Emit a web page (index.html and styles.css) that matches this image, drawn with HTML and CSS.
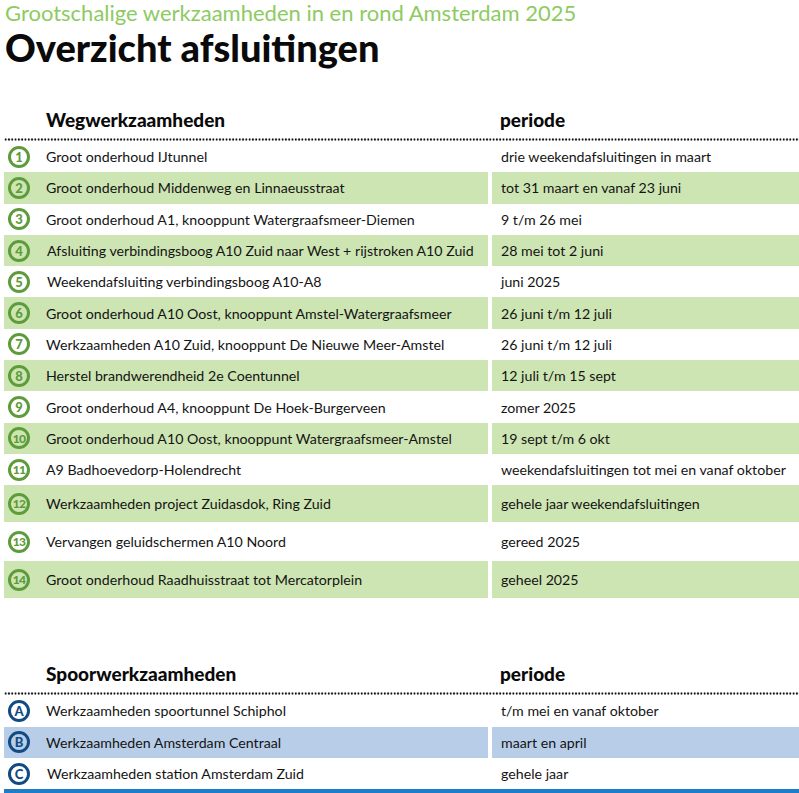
FILE: index.html
```html
<!DOCTYPE html>
<html lang="nl">
<head>
<meta charset="utf-8">
<title>Overzicht afsluitingen</title>
<link rel="stylesheet" href="styles.css">
</head>
<body>
<div class="page">
  <header class="head">
    <div class="subtitle">Grootschalige werkzaamheden in en rond Amsterdam 2025</div>
    <h1 class="title">Overzicht afsluitingen</h1>
  </header>

  <section class="tbl road">
    <div class="thead">
      <div class="th th-name">Wegwerkzaamheden</div>
      <div class="th th-per">periode</div>
    </div>
    <div class="dots"></div>
    <div class="row"><div class="c1"><span class="badge">1</span><span class="name">Groot onderhoud IJtunnel</span></div><div class="c2">drie weekendafsluitingen in maart</div></div>
    <div class="row hl"><div class="c1"><span class="badge">2</span><span class="name">Groot onderhoud Middenweg en Linnaeusstraat</span></div><div class="c2">tot 31 maart en vanaf 23 juni</div></div>
    <div class="row"><div class="c1"><span class="badge">3</span><span class="name">Groot onderhoud A1, knooppunt Watergraafsmeer-Diemen</span></div><div class="c2">9 t/m 26 mei</div></div>
    <div class="row hl"><div class="c1"><span class="badge">4</span><span class="name nudge">Afsluiting verbindingsboog A10 Zuid naar West + rijstroken A10 Zuid</span></div><div class="c2">28 mei tot 2 juni</div></div>
    <div class="row"><div class="c1"><span class="badge">5</span><span class="name nudge">Weekendafsluiting verbindingsboog A10-A8</span></div><div class="c2">juni 2025</div></div>
    <div class="row hl"><div class="c1"><span class="badge">6</span><span class="name">Groot onderhoud A10 Oost, knooppunt Amstel-Watergraafsmeer</span></div><div class="c2">26 juni t/m 12 juli</div></div>
    <div class="row"><div class="c1"><span class="badge">7</span><span class="name">Werkzaamheden A10 Zuid, knooppunt De Nieuwe Meer-Amstel</span></div><div class="c2">26 juni t/m 12 juli</div></div>
    <div class="row hl"><div class="c1"><span class="badge">8</span><span class="name">Herstel brandwerendheid 2e Coentunnel</span></div><div class="c2">12 juli t/m 15 sept</div></div>
    <div class="row"><div class="c1"><span class="badge">9</span><span class="name">Groot onderhoud A4, knooppunt De Hoek-Burgerveen</span></div><div class="c2">zomer 2025</div></div>
    <div class="row hl"><div class="c1"><span class="badge two">10</span><span class="name">Groot onderhoud A10 Oost, knooppunt Watergraafsmeer-Amstel</span></div><div class="c2">19 sept t/m 6 okt</div></div>
    <div class="row"><div class="c1"><span class="badge two">11</span><span class="name">A9 Badhoevedorp-Holendrecht</span></div><div class="c2">weekendafsluitingen tot mei en vanaf oktober</div></div>
    <div class="row hl tall"><div class="c1"><span class="badge two">12</span><span class="name">Werkzaamheden project Zuidasdok, Ring Zuid</span></div><div class="c2">gehele jaar weekendafsluitingen</div></div>
    <div class="row taller"><div class="c1"><span class="badge two">13</span><span class="name">Vervangen geluidschermen A10 Noord</span></div><div class="c2">gereed 2025</div></div>
    <div class="row hl tall"><div class="c1"><span class="badge two">14</span><span class="name">Groot onderhoud Raadhuisstraat tot Mercatorplein</span></div><div class="c2">geheel 2025</div></div>
  </section>

  <section class="tbl rail">
    <div class="thead">
      <div class="th th-name">Spoorwerkzaamheden</div>
      <div class="th th-per">periode</div>
    </div>
    <div class="dots"></div>
    <div class="row"><div class="c1"><span class="badge">A</span><span class="name">Werkzaamheden spoortunnel Schiphol</span></div><div class="c2">t/m mei en vanaf oktober</div></div>
    <div class="row hl"><div class="c1"><span class="badge">B</span><span class="name">Werkzaamheden Amsterdam Centraal</span></div><div class="c2">maart en april</div></div>
    <div class="row"><div class="c1"><span class="badge">C</span><span class="name nudge">Werkzaamheden station Amsterdam Zuid</span></div><div class="c2">gehele jaar</div></div>
    <div class="bar"></div>
  </section>
</div>
</body>
</html>
```

FILE: styles.css
```css
html, body {
  margin: 0;
  padding: 0;
  background: #ffffff;
}

body {
  font-family: "Lato", "Open Sans", "DejaVu Sans", sans-serif;
  color: #141414;
}

.page {
  padding-left: 4px;
  padding-top: 1px;
  width: 795px;
}

.head {
  padding-left: 1px;
}

.subtitle {
  font-size: 22px;
  line-height: 23px;
  color: #8dcb62;
}

.title {
  margin: 0;
  font-size: 38px;
  line-height: 46px;
  font-weight: 900;
  color: #0a0a0a;
}

.tbl {
  display: flex;
  flex-direction: column;
}

.road {
  margin-top: 30px;
}

.rail {
  margin-top: 56px;
}

.thead {
  display: grid;
  grid-template-columns: 484px 1fr;
  column-gap: 4px;
  height: 38px;
  align-items: center;
}

.th {
  font-size: 19px;
  font-weight: 900;
  color: #0a0a0a;
}

.th-name {
  padding-left: 42px;
}

.th-per {
  padding-left: 8px;
}

.dots {
  height: 3px;
  background-image: radial-gradient(circle at center, #111 0.9px, transparent 1.3px);
  background-size: 3.3px 3px;
  background-repeat: repeat-x;
}

.row {
  display: grid;
  grid-template-columns: 484px 1fr;
  column-gap: 4px;
  height: 31.3px;
  font-size: 14.2px;
}

.row.tall {
  height: 37px;
}

.row.taller {
  height: 39px;
}

.c1, .c2 {
  display: flex;
  align-items: center;
}

.c2 {
  padding-left: 9px;
}

.road .row.hl .c1,
.road .row.hl .c2 {
  background: #cde5b2;
}

.rail .row.hl .c1,
.rail .row.hl .c2 {
  background: #b8cee8;
}

.badge {
  box-sizing: border-box;
  width: 22px;
  height: 22px;
  margin-left: 4px;
  margin-right: 16px;
  border-radius: 50%;
  border: 3px solid #5e9b3b;
  color: #5e9b3b;
  font-weight: 900;
  font-size: 13px;
  display: flex;
  align-items: center;
  justify-content: center;
  flex: none;
}

.badge.two {
  font-size: 12px;
  letter-spacing: -0.6px;
}

.rail .badge {
  border-color: #124b82;
  color: #124b82;
}

.name.nudge {
  padding-left: 1px;
}

.bar {
  height: 5px;
  background: #1f7cc6;
}
```
